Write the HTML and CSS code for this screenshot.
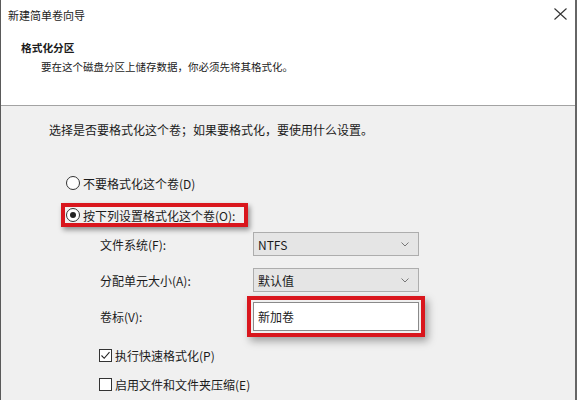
FILE: index.html
```html
<!DOCTYPE html>
<html lang="zh-CN">
<head>
  <meta charset="UTF-8" />
  <title>新建简单卷向导</title>
  <link rel="stylesheet" href="styles.css">
</head>
<body>

  <div class="window">
    <div class="header">
      <div class="titlebar">
        <span class="title">新建简单卷向导</span>
        <span class="close">
          <svg width="13" height="12" viewBox="0 0 13 12">
            <path d="M0.5 0.5 L12.5 11.5 M12.5 0.5 L0.5 11.5" stroke="#333" stroke-width="1.1" fill="none" />
          </svg>
        </span>
      </div>
      <div class="page-title">格式化分区</div>
      <div class="page-sub">要在这个磁盘分区上储存数据，你必须先将其格式化。</div>
    </div>

    <div class="content">
      <p class="intro">选择是否要格式化这个卷；如果要格式化，要使用什么设置。</p>

      <div class="option"><span class="radio"></span>不要格式化这个卷(D)</div>
      <div class="option marked"><span class="radio checked"></span>按下列设置格式化这个卷(O):</div>

      <div class="field first">
        <span class="label">文件系统(F):</span>
        <div class="select">NTFS
          <svg class="chevron" width="8" height="5" viewBox="0 0 8 5"><path d="M0.5 0.5 L4 4 L7.5 0.5" stroke="#777" fill="none" /></svg>
        </div>
      </div>
      <div class="field second">
        <span class="label">分配单元大小(A):</span>
        <div class="select">默认值
          <svg class="chevron" width="8" height="5" viewBox="0 0 8 5"><path d="M0.5 0.5 L4 4 L7.5 0.5" stroke="#777" fill="none" /></svg>
        </div>
      </div>
      <div class="field third">
        <span class="label">卷标(V):</span>
        <div class="textbox marked-box">新加卷</div>
      </div>

      <div class="check first-check">
        <span class="box">
          <svg width="11" height="11" viewBox="0 0 11 11"><path d="M1.5 5.5 L4.2 8.3 L9.5 2.2" stroke="#222" stroke-width="1.1" fill="none" /></svg>
        </span>执行快速格式化(P)
      </div>
      <div class="check"><span class="box"></span>启用文件和文件夹压缩(E)</div>
    </div>
  </div>

</body>
</html>
```

FILE: styles.css
```css
body {
  margin: 0;
  font-family: "Noto Sans CJK SC", "Noto Sans", sans-serif;
  color: #1b1b1b;
  background-color: #f0f0f0;
}

.window {
  height: 400px;
  border-left: 1px solid #5a5a5a;
  border-right: 2px solid #666;
  background-color: #f0f0f0;
  overflow: hidden;
}

.header {
  height: 105px;
  background-color: #fff;
  border-bottom: 1px solid #a3a3a3;
}

.titlebar {
  height: 30px;
  display: flex;
  align-items: center;
  justify-content: space-between;
  padding: 0 8px 0 7px;
}

.title {
  font-size: 11px;
}

.close {
  display: flex;
  margin-top: -2px;
}

.page-title {
  margin-top: 9px;
  padding-left: 20px;
  font-size: 10.7px;
  font-weight: bold;
  line-height: 18px;
}

.page-sub {
  margin-top: 1px;
  padding-left: 40px;
  font-size: 10.5px;
  line-height: 18px;
}

.content {
  font-size: 12px;
}

.intro {
  margin: 16px 0 0 48px;
  line-height: 16px;
}

.option {
  display: flex;
  align-items: center;
  gap: 3px;
  width: fit-content;
  height: 24px;
  box-sizing: border-box;
  margin: 33px 0 0 60px;
  padding: 0 9px 0 1px;
  border: 4px solid transparent;
}

.option + .option {
  margin-top: 8px;
}

.option.marked {
  border-color: #d9161d;
  box-shadow: 2px 3px 5px rgba(0, 0, 0, 0.4);
}

.radio {
  width: 12px;
  height: 12px;
  border: 1px solid #333;
  border-radius: 50%;
  background-color: #fff;
  display: flex;
  align-items: center;
  justify-content: center;
}

.radio.checked::after {
  content: "";
  width: 6px;
  height: 6px;
  border-radius: 50%;
  background-color: #222;
}

.field {
  display: flex;
  align-items: center;
  margin-left: 99px;
}

.field.first {
  margin-top: 5px;
}

.field.second {
  margin-top: 12px;
}

.field.third {
  margin-top: 10px;
}

.label {
  width: 153px;
}

.select {
  width: 166px;
  height: 24px;
  box-sizing: border-box;
  border: 1px solid #adadad;
  background-color: #e5e5e5;
  display: flex;
  align-items: center;
  justify-content: space-between;
  padding: 0 9px 0 4px;
}

.textbox {
  width: 166px;
  height: 29px;
  box-sizing: border-box;
  border: 1px solid #8a8a8a;
  background-color: #fff;
  padding: 5px 0 0 4px;
}

.marked-box {
  outline: 4px solid #d9161d;
  outline-offset: 2px;
  box-shadow: 0 0 0 6px #f0f0f0, 3px 4px 8px 6px rgba(0, 0, 0, 0.35);
}

.check {
  display: flex;
  align-items: center;
  gap: 3px;
  height: 20px;
  margin: 9px 0 0 98px;
}

.check.first-check {
  margin-top: 14px;
}

.box {
  width: 11px;
  height: 11px;
  border: 1px solid #333;
  background-color: #fff;
  display: flex;
}
```
